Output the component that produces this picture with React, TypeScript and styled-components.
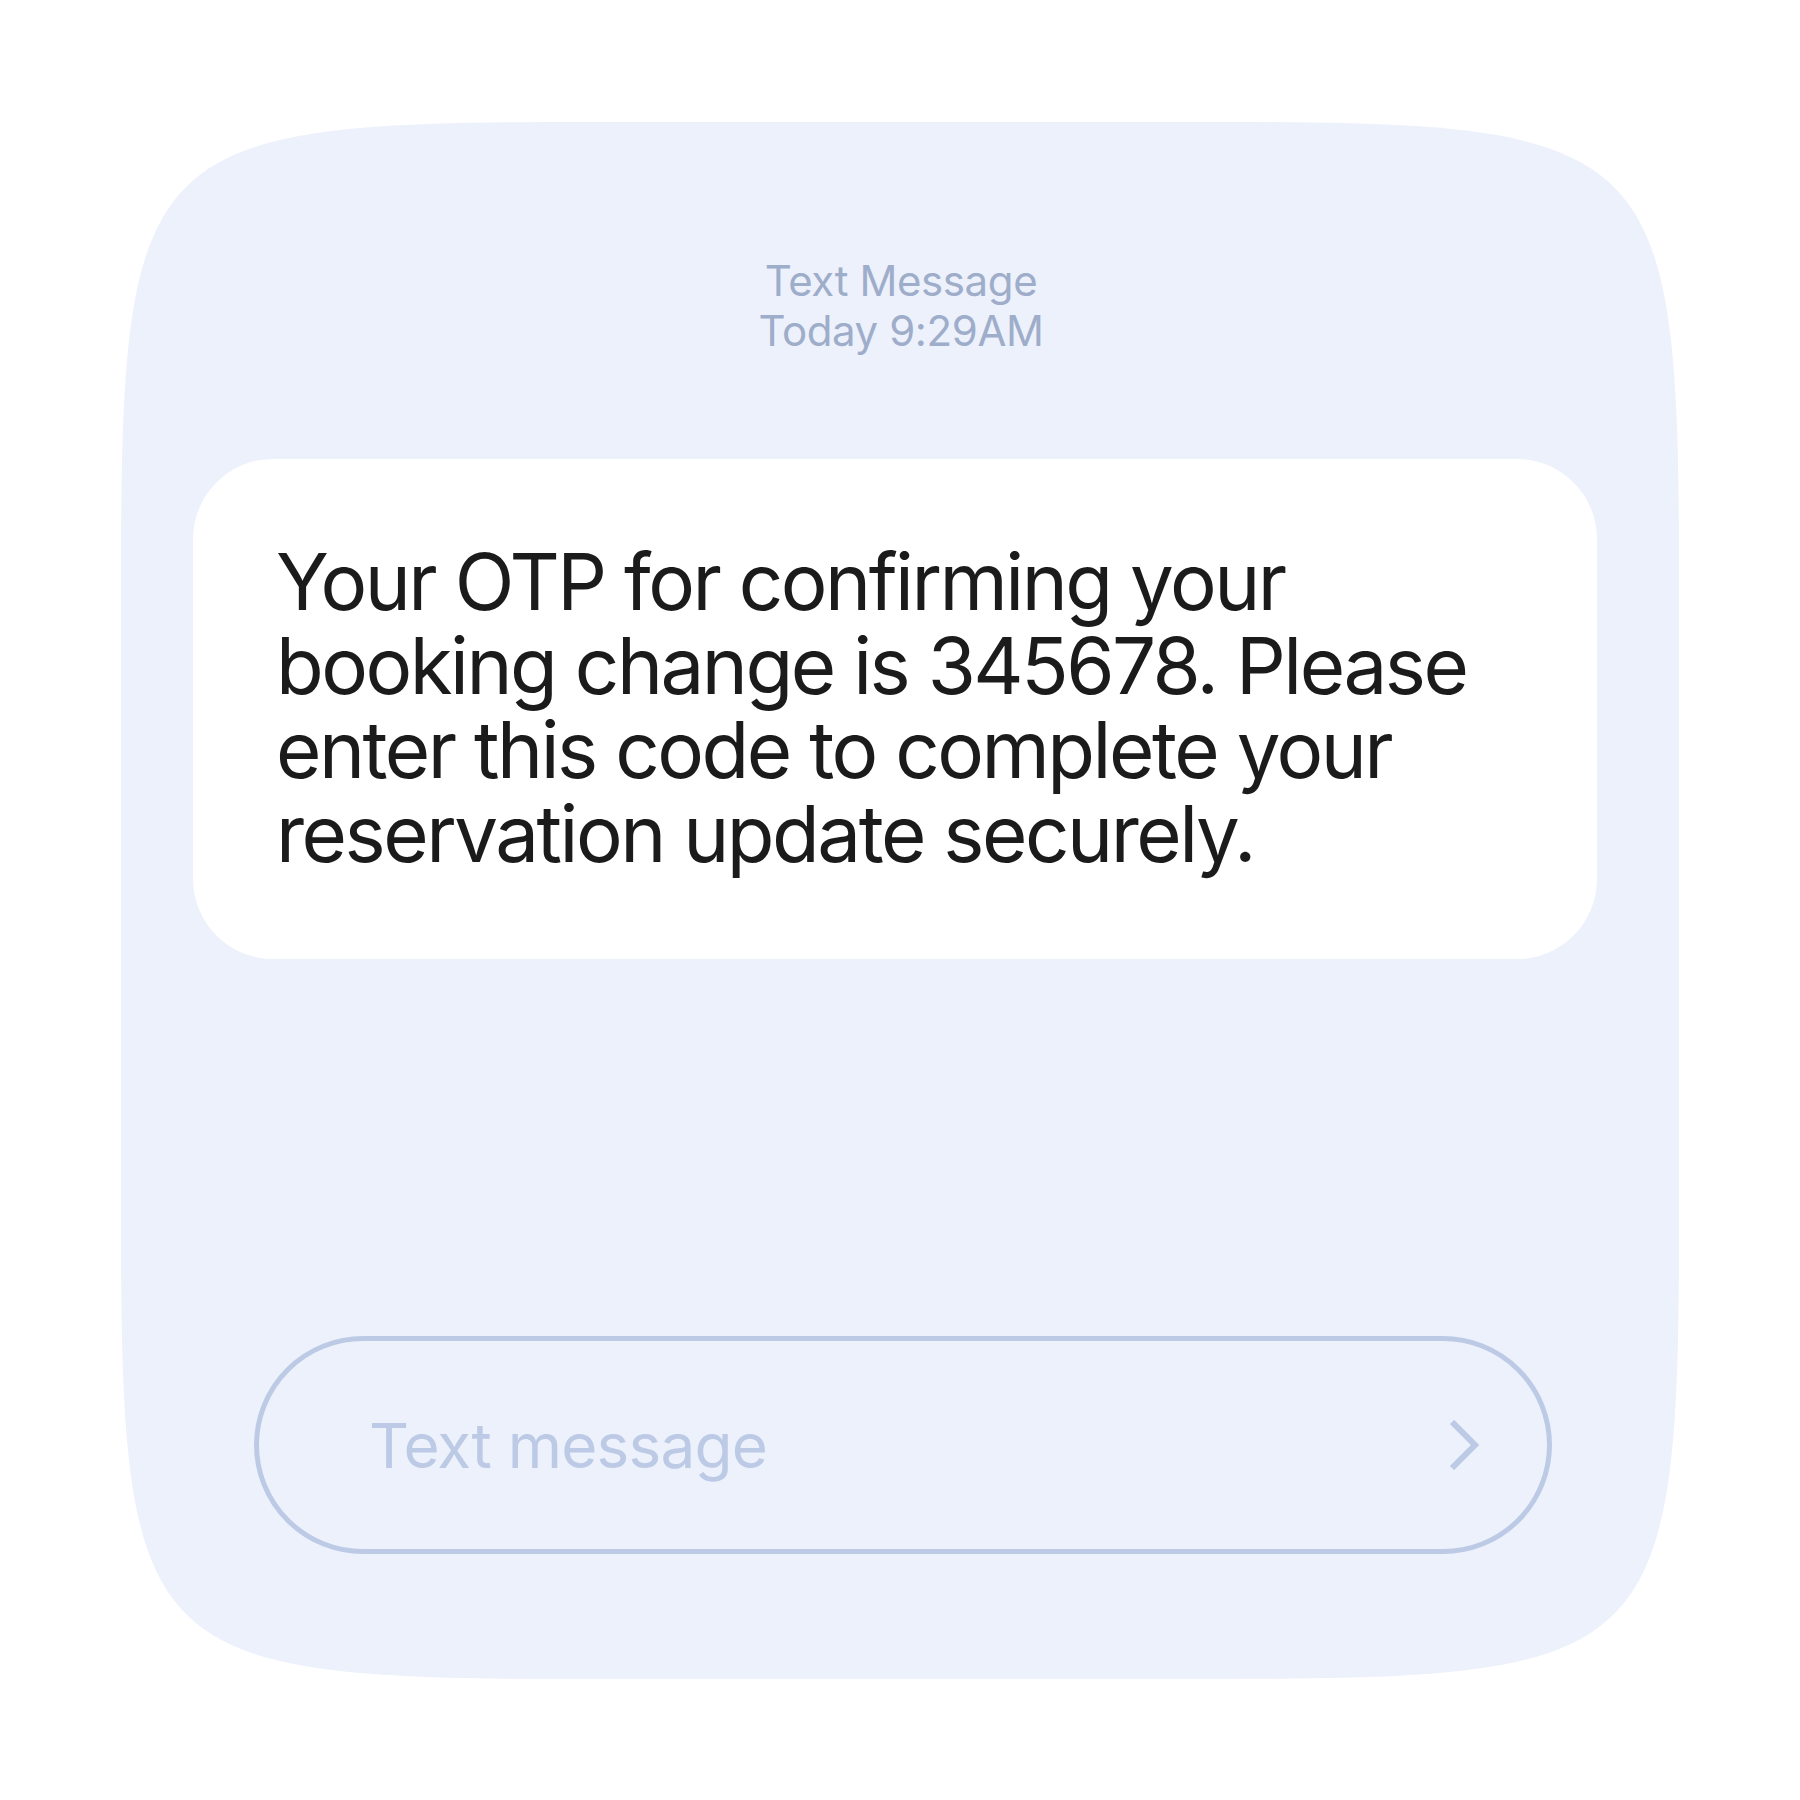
import React from "react";
import styled, { createGlobalStyle } from "styled-components";

const W = 1558;
const H = 1557;
const R = 460;
const C = 20;
const squircle = `M 0 ${R} C 0 ${C} ${C} 0 ${R} 0 L ${W - R} 0 C ${W - C} 0 ${W} ${C} ${W} ${R} L ${W} ${H - R} C ${W} ${H - C} ${W - C} ${H} ${W - R} ${H} L ${R} ${H} C ${C} ${H} 0 ${H - C} 0 ${H - R} Z`;

const GlobalStyle = createGlobalStyle`
  html, body {
    margin: 0;
    padding: 0;
    background: #ffffff;
  }
  body {
    font-family: Inter, "Noto Sans", "Liberation Sans", sans-serif;
  }
`;

const Page = styled.div`
  width: 1800px;
  height: 1800px;
  box-sizing: border-box;
  padding: 122px 0 0 121px;
  background: #ffffff;
`;

const Card = styled.section`
  width: ${W}px;
  height: ${H}px;
  background: #edf1fc;
  clip-path: path("${squircle}");
  display: flex;
  flex-direction: column;
  box-sizing: border-box;
  padding-top: 134px;
  padding-bottom: 125px;
`;

const Header = styled.header`
  text-align: center;
  color: #9eadc9;
  font-family: Inter, sans-serif;
  font-size: 42px;
  line-height: 50px;
  letter-spacing: -0.4px;
  margin-left: 2px;
`;

const Bubble = styled.div`
  margin: 103px 82px 0 72px;
  background: #ffffff;
  border-radius: 80px;
  padding: 81px 80px 83px 83px;
  font-family: Inter, sans-serif;
  font-size: 78px;
  line-height: 84px;
  letter-spacing: -2.5px;
  color: #1b1b1b;
`;

const Spacer = styled.div`
  flex: 1;
`;

const InputPill = styled.form`
  margin: 0 127px 0 133px;
  height: 218px;
  box-sizing: border-box;
  border: 5px solid #bccae5;
  border-radius: 109px;
  display: flex;
  align-items: center;
  padding: 0 63px 0 110px;
`;

const MessageInput = styled.input`
  flex: 1;
  min-width: 0;
  border: none;
  outline: none;
  background: transparent;
  padding: 0;
  font-family: Inter, sans-serif;
  font-size: 62px;
  letter-spacing: -0.8px;
  color: #1b1b1b;
  &::placeholder {
    color: #bccae5;
  }
`;

const SendIcon = styled.svg`
  width: 40px;
  height: 50px;
  flex: none;
`;

export default function App() {
  return (
    <>
      <GlobalStyle />
      <Page>
        <Card>
          <Header>
            <div>Text Message</div>
            <div>Today 9:29AM</div>
          </Header>
          <Bubble>
            Your OTP for confirming your booking change is 345678. Please enter
            this code to complete your reservation update securely.
          </Bubble>
          <Spacer />
          <InputPill onSubmit={(e) => e.preventDefault()}>
            <MessageInput placeholder="Text message" />
            <SendIcon viewBox="0 0 40 50">
              <path
                d="M 8 2 L 31 25 L 8 48"
                fill="none"
                stroke="#bccae5"
                strokeWidth="6"
                strokeLinecap="butt"
                strokeLinejoin="miter"
              />
            </SendIcon>
          </InputPill>
        </Card>
      </Page>
    </>
  );
}
